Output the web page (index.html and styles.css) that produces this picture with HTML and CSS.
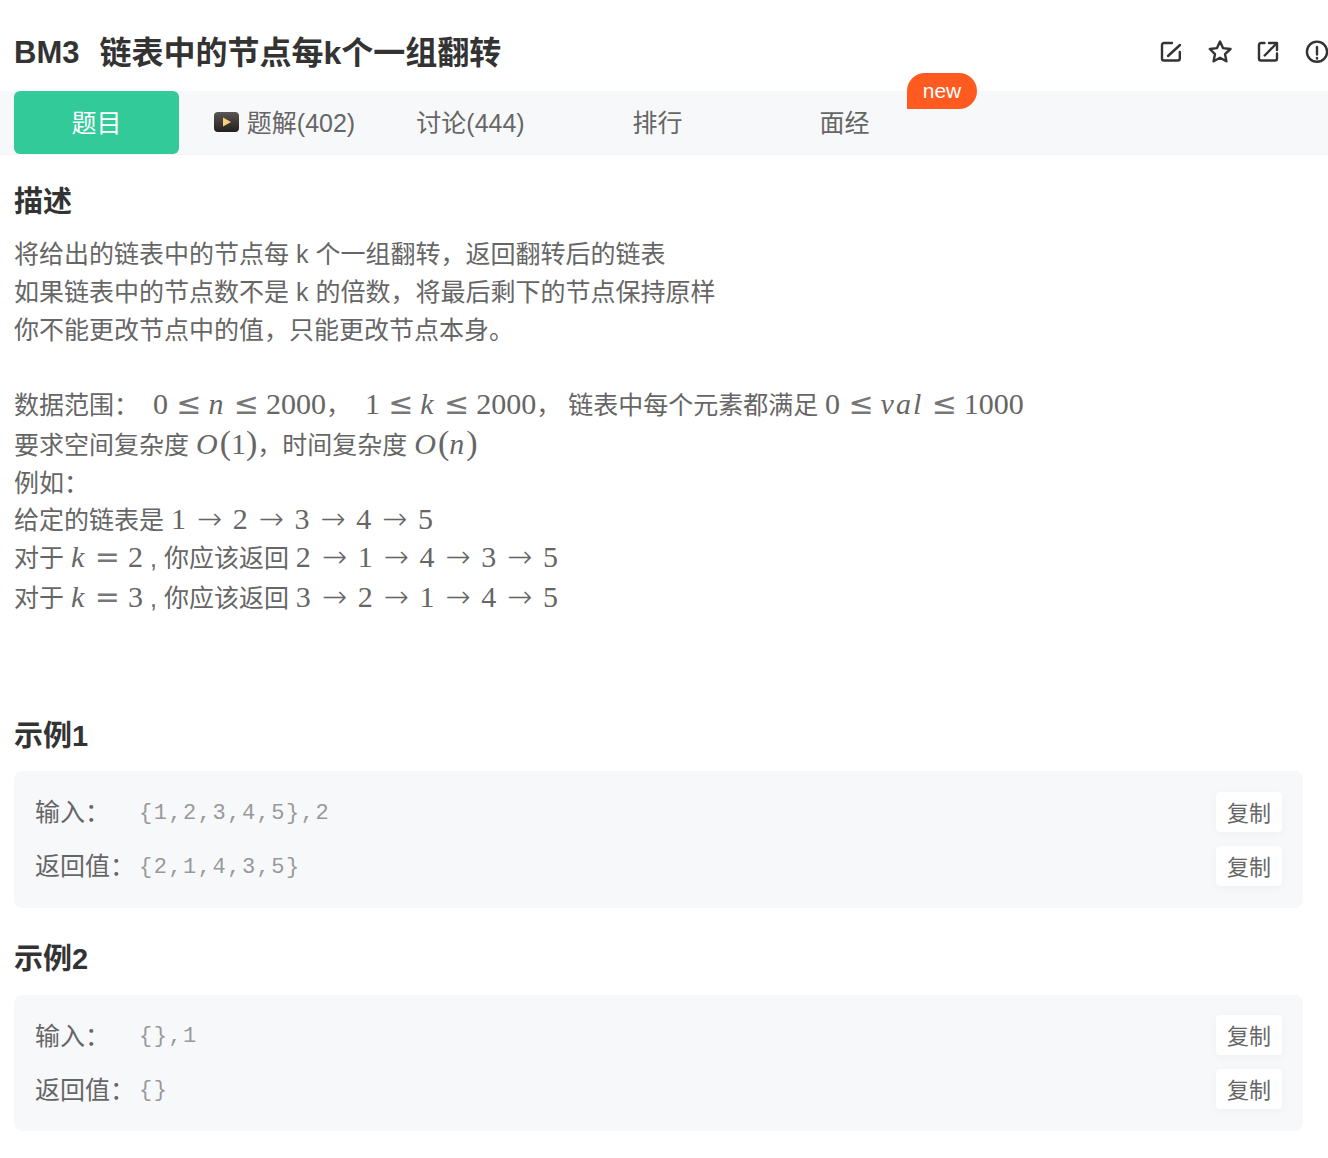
FILE: index.html
```html
<!DOCTYPE html>
<html lang="zh-CN">
<head>
<meta charset="utf-8">
<title>BM3 链表中的节点每k个一组翻转</title>
<link rel="stylesheet" href="styles.css">
</head>
<body>
<header class="header">
  <h1 class="title"><span class="title-id">BM3</span><span>链表中的节点每k个一组翻转</span></h1>
  <div class="actions">
    <svg class="icon" viewBox="0 0 24 24"><path d="M13 3H5a2 2 0 0 0-2 2v13.500a2 2 0 0 0 2 2h13.800a2 2 0 0 0 2-2V12"/><path d="M9 16L21 5"/></svg>
    <svg class="icon" viewBox="0 0 24 24"><path d="M12 1.500l3 6.600 7.500.9-5.500 5.100 1.400 7.200-6.400-3.500-6.400 3.500 1.400-7.200L1.800 9l7.200-.9z"/></svg>
    <svg class="icon" viewBox="0 0 24 24"><path d="M8.500 3H5a2 2 0 0 0-2 2v13.500a2 2 0 0 0 2 2h14a2 2 0 0 0 2-2V13.500"/><path d="M8.700 15.500L20 4"/><path d="M13 3h8v7"/></svg>
    <svg class="icon" viewBox="0 0 24 24"><circle cx="12" cy="11.700" r="10.100"/><path d="M12 7v7.500"/><path d="M12 18v.5"/></svg>
  </div>
</header>
<nav class="tabs">
  <a class="tab tab-active">题目</a>
  <a class="tab tab-video"><svg class="video" viewBox="0 0 25 20"><defs><linearGradient id="vg" x1="0" y1="0" x2="0" y2="1"><stop offset="0" stop-color="#5a5653"/><stop offset="1" stop-color="#221f1e"/></linearGradient></defs><rect width="25" height="20" rx="4" fill="url(#vg)"/><path d="M9 5.500l8 4.500-8 4.500z" fill="#fbcf79"/></svg>题解(402)</a>
  <a class="tab">讨论(444)</a>
  <a class="tab">排行</a>
  <a class="tab">面经</a>
  <span class="badge">new</span>
</nav>
<main class="content">
  <h2 class="heading heading-first">描述</h2>
  <div class="desc">
    <p class="line">将给出的链表中的节点每 k 个一组翻转，返回翻转后的链表</p>
    <p class="line">如果链表中的节点数不是 k 的倍数，将最后剩下的节点保持原样</p>
    <p class="line">你不能更改节点中的值，只能更改节点本身。</p>
    <p class="blank"></p>
    <p class="line">数据范围： <span class="m sp"><b>0</b><i class="rel">≤</i><em>n</em><i class="rel">≤</i><b>2000</b></span><span class="cm">，</span><span class="m sp"><b>1</b><i class="rel">≤</i><em>k</em><i class="rel">≤</i><b>2000</b></span><span class="cm">，</span>链表中每个元素都满足 <span class="m"><b>0</b><i class="rel">≤</i><em>val</em><i class="rel">≤</i><b>1000</b></span></p>
    <p class="line lh42">要求空间复杂度 <span class="m"><em>O</em><span class="par">(</span><b>1</b><span class="par">)</span></span>，时间复杂度 <span class="m"><em>O</em><span class="par">(</span><em>n</em><span class="par">)</span></span></p>
    <p class="line lh36">例如：</p>
    <p class="line lh36">给定的链表是 <span class="m"><b>1</b><i class="arr">→</i><b>2</b><i class="arr">→</i><b>3</b><i class="arr">→</i><b>4</b><i class="arr">→</i><b>5</b></span></p>
    <p class="line lh40">对于 <span class="m"><em>k</em><i class="rel eq">=</i><b>2</b></span> , 你应该返回 <span class="m"><b>2</b><i class="arr">→</i><b>1</b><i class="arr">→</i><b>4</b><i class="arr">→</i><b>3</b><i class="arr">→</i><b>5</b></span></p>
    <p class="line lh40">对于 <span class="m"><em>k</em><i class="rel eq">=</i><b>3</b></span> , 你应该返回 <span class="m"><b>3</b><i class="arr">→</i><b>2</b><i class="arr">→</i><b>1</b><i class="arr">→</i><b>4</b><i class="arr">→</i><b>5</b></span></p>
  </div>
  <h2 class="heading heading-ex1">示例1</h2>
  <section class="box">
    <div class="row"><span class="label">输入：</span><code class="value">{1,2,3,4,5},2</code><button class="copy">复制</button></div>
    <div class="row"><span class="label">返回值：</span><code class="value">{2,1,4,3,5}</code><button class="copy">复制</button></div>
  </section>
  <h2 class="heading heading-ex2">示例2</h2>
  <section class="box">
    <div class="row"><span class="label">输入：</span><code class="value">{},1</code><button class="copy">复制</button></div>
    <div class="row"><span class="label">返回值：</span><code class="value">{}</code><button class="copy">复制</button></div>
  </section>
</main>
</body>
</html>
```
FILE: styles.css
```css
* { box-sizing: border-box; }
html, body { margin: 0; padding: 0; background: #fff; overflow: hidden; }
body {
  width: 1328px;
  height: 1158px;
  font-family: "Liberation Sans", "Noto Sans CJK SC", sans-serif;
  color: #666;
  font-size: 25px;
}
.header {
  height: 91px;
  padding: 14px 0 0 14px;
  display: flex;
  align-items: center;
  justify-content: space-between;
}
.title {
  margin: 0;
  font-size: 32px;
  font-weight: 700;
  color: #333;
  line-height: 40px;
  display: flex;
  gap: 20px;
}
.title-id { font-size: 31px; }
.actions { display: flex; gap: 24.67px; margin: -1px -1px 0 0; }
.icon {
  width: 24px;
  height: 24px;
  fill: none;
  stroke: #333;
  stroke-width: 2.4;
  stroke-linejoin: round;
  stroke-linecap: round;
}
.tabs {
  position: relative;
  height: 64px;
  padding: 0 14px 1px;
  display: flex;
  gap: 22px;
  background: #f7f8fa;
  border-bottom: 1px solid #f2f3f5;
}
.tab {
  width: 165px;
  height: 63px;
  padding-bottom: 4px;
  display: flex;
  align-items: center;
  justify-content: center;
  border-radius: 6px;
  color: #666;
}
.tab-active { background: #32ca99; color: #fff; }
.tab-video { padding-left: 2px; }
.video { width: 25px; height: 20px; margin: 3px 8px 0 0; }
.badge {
  position: absolute;
  left: 907px;
  top: -18px;
  width: 70px;
  height: 36px;
  border-radius: 18px 18px 18px 0;
  background: #ff5a1f;
  color: #fff;
  font-size: 21px;
  line-height: 35px;
  text-align: center;
}
.content { padding: 0 25px 0 14px; }
.heading {
  margin: 0;
  font-size: 29px;
  line-height: 38px;
  font-weight: 700;
  color: #333;
}
.heading-first { margin-top: 28px; margin-bottom: 14px; }
.heading-ex1 { margin-top: 100px; margin-bottom: 16px; }
.heading-ex2 { margin-top: 32px; margin-bottom: 17px; }
.line { margin: 0; line-height: 38px; height: 38px; white-space: nowrap; }
.blank { margin: 0; height: 36px; }
.lh36 { line-height: 36px; height: 36px; }
.lh40 { line-height: 40px; height: 40px; }
.lh42 { line-height: 42px; height: 42px; }
.m {
  font-family: "Liberation Serif", serif;
  font-size: 30px;
  font-style: normal;
}
.m b { font-weight: 400; }
.m em { font-style: italic; letter-spacing: 2px; }
.m i {
  font-family: "DejaVu Sans", sans-serif;
  font-style: normal;
  font-weight: 200;
  display: inline-block;
  text-align: center;
  margin: 0 8.4px;
}
.m .rel { width: 23.7px; font-size: 30px; font-weight: 400; color: #777; line-height: 30px; }
.m .eq { width: 25px; }
.m .arr { width: 30px; font-size: 30px; line-height: 30px; }
.par { font-size: 34px; font-weight: 400; line-height: 30px; }
.sp { margin-left: 7px; }
.cm { display: inline-block; width: 32px; text-align: left; }
.box {
  padding: 13.5px 21px 15px;
  background: #f7f8fa;
  border-radius: 8px;
}
.row { height: 54px; display: flex; align-items: center; }
.label { width: 104px; flex: none; padding-bottom: 3px; }
.value {
  flex: 1;
  padding-top: 3px;
  font-family: "Liberation Mono", monospace;
  font-size: 22px;
  letter-spacing: 1.5px;
  color: #999;
}
.copy {
  width: 66px;
  height: 40px;
  padding: 0 0 2px;
  border: 0;
  border-radius: 4px;
  background: #fff;
  color: #666;
  font-family: inherit;
  font-size: 22px;
  box-shadow: 0 2px 8px rgba(0, 0, 0, 0.04);
}
```
